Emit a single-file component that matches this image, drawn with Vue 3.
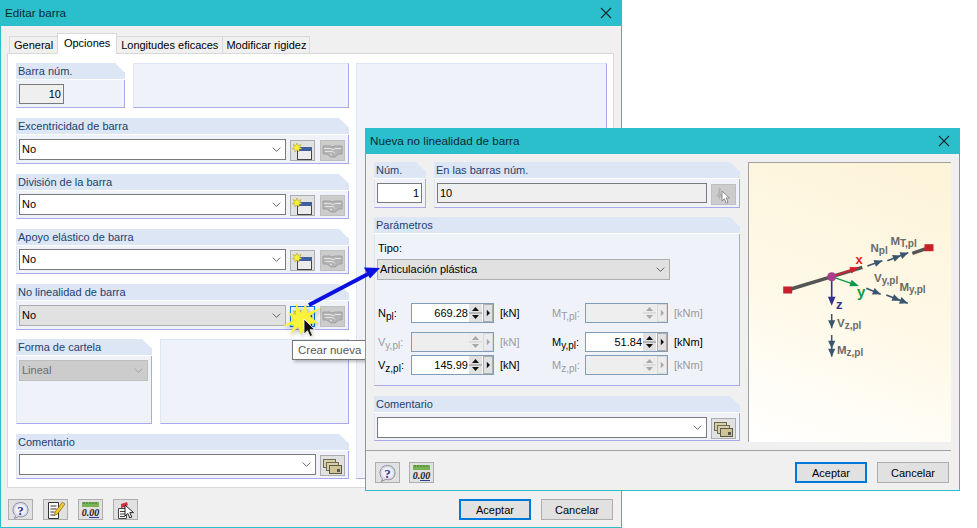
<script setup>
const leftRows = [
  { title: 'Excentricidad de barra' },
  { title: 'División de la barra', tight: true },
  { title: 'Apoyo elástico de barra', tight: true },
  { title: 'No linealidad de barra', active: true }
];

const paramRows = [
  [
    { sym: 'N', sub: 'pl', value: '669.28', unit: '[kN]' },
    { sym: 'M', sub: 'T,pl', value: '', unit: '[kNm]', off: true }
  ],
  [
    { sym: 'V', sub: 'y,pl', value: '', unit: '[kN]', off: true },
    { sym: 'M', sub: 'y,pl', value: '51.84', unit: '[kNm]' }
  ],
  [
    { sym: 'V', sub: 'z,pl', value: '145.99', unit: '[kN]' },
    { sym: 'M', sub: 'z,pl', value: '', unit: '[kNm]', off: true }
  ]
];

// triangle whose tip sits at (x, y), pointing along the direction (dx, dy)
const head = (x, y, dx, dy, len = 8, half = 3.6) => {
  const d = Math.hypot(dx, dy);
  const ux = dx / d;
  const uy = dy / d;
  const bx = x - ux * len;
  const by = y - uy * len;
  return `M${x} ${y}L${bx - uy * half} ${by + ux * half}L${bx + uy * half} ${by - ux * half}Z`;
};

// force arrows of the picture: start, end, second head when it is a moment
const forces = [
  { x1: 868.3, y1: 266, x2: 883.3, y2: 260.7 },
  { x1: 888.3, y1: 260.7, x2: 909.3, y2: 252.7, twin: true },
  { x1: 867.3, y1: 288.3, x2: 881.7, y2: 294.3 },
  { x1: 887.3, y1: 295, x2: 908.7, y2: 303.3, twin: true },
  { x1: 832.7, y1: 314, x2: 832.7, y2: 328.3 },
  { x1: 832.7, y1: 335, x2: 832.7, y2: 356.7, twin: true }
].map((f) => {
  const dx = f.x2 - f.x1;
  const dy = f.y2 - f.y1;
  const d = Math.hypot(dx, dy);
  let heads = head(f.x2, f.y2, dx, dy);
  if (f.twin) heads += head(f.x2 - (dx / d) * 8, f.y2 - (dy / d) * 8, dx, dy);
  return { stem: `M${f.x1} ${f.y1}L${f.x2} ${f.y2}`, heads };
});

const axisHeads = [
  { d: head(860, 267.3, 27, -9.4, 9, 3.4), fill: '#d8202c' },
  { d: head(860, 286, 27, 9.3, 9, 3.4), fill: '#0a9a4a' },
  { d: head(832.7, 305.7, 0, 1, 9, 3.8), fill: '#33308f' }
];
</script>

<template>
  <div class="desktop">
    <svg class="sprite" width="0" height="0">
      <defs>
        <symbol id="i-new" viewBox="0 0 21 17">
          <rect x="5.5" y="4.5" width="14" height="12" fill="#ececec" stroke="#444" />
          <rect x="6" y="4" width="14" height="4" fill="#3f5f9f" />
          <path d="M5 0l1.200 2.600L9 1.600 7.600 4.200 10 5.800 7.200 6.200 7 9 5 7 3 9l-.2-2.800L0 5.800l2.400-1.600L1 1.600l2.800 1z" fill="#f6ee3a" stroke="#a89a2a" stroke-width=".5" />
        </symbol>
        <symbol id="i-link" viewBox="0 0 21 17">
          <path d="M1 3h7l2 1 3-1h7v8h-3l-4 3H9L5 11H1z" fill="#b4b4b4" stroke="#a0a0a0" />
          <path d="M2 5.500h6l3 1 3-1h5M3 8.500h8l2 2M8 11l2 1" fill="none" stroke="#e4e4e4" />
        </symbol>
        <symbol id="i-stack" viewBox="0 0 21 17">
          <rect x="1.500" y="1.500" width="12" height="8" fill="#d8cfa8" stroke="#6b6b55" />
          <rect x="4.500" y="4.500" width="12" height="8" fill="#d8cfa8" stroke="#6b6b55" />
          <rect x="7.500" y="7.500" width="12" height="8" fill="#cfc493" stroke="#5a5a48" />
          <rect x="15" y="11" width="3" height="3" fill="#555" />
        </symbol>
        <symbol id="i-help" viewBox="0 0 21 17">
          <path d="M10.500 .5C5.500 .5 3 4 3 8c0 2.500 1 4.500 2.500 5.600L4.500 16.500l4-2c.6.200 1.300.300 2 .300C15.500 14.800 18 12 18 8S15.500 .5 10.500 .5z" fill="#d9dce8" stroke="#8a8f9f" />
          <circle cx="10.500" cy="7.800" r="5.500" fill="#eef0f6" />
          <text x="10.500" y="13" text-anchor="middle" class="help-mark">?</text>
        </symbol>
        <symbol id="i-note" viewBox="0 0 21 17">
          <path d="M3.500 .5h10v16h-10z" fill="#fbfbfb" stroke="#333" />
          <path d="M5.500 4h6M5.500 7h6M5.500 10h4M5.500 13h4" stroke="#333" />
          <path d="M17.500 0l2.500 2-7.500 10-3 1.500.5-3.500z" fill="#f5c92b" stroke="#7a5a10" stroke-width=".7" />
        </symbol>
        <symbol id="i-zero" viewBox="0 0 21 17">
          <rect x="2" y="0" width="17" height="5" fill="#77b255" />
          <path d="M4 0v2M7 0v2M10 0v2M13 0v2M16 0v2" stroke="#3f7a2c" />
          <text x="10.500" y="14" text-anchor="middle" class="zero-mark">0.00</text>
          <path d="M9 15.500h10" stroke="#2c3f8f" />
        </symbol>
        <symbol id="i-pick" viewBox="0 0 21 17">
          <path d="M3.500 6.500h8v10h-8z" fill="#fafafa" stroke="#444" />
          <path d="M5 9.500h5M5 12h5M5 14.500h5" stroke="#444" />
          <path d="M6 2l6-2 1 3-2 1 1 4-3-3-3 1z" fill="#d83040" />
          <path d="M10 3v11l2.800-2.600 2 4.600 2-.9-2-4.500h3.700z" fill="#fff" stroke="#222" />
        </symbol>
        <symbol id="i-cursor" viewBox="0 0 21 17">
          <path d="M6 0l2 2-1 4 3 3-3 1 0 3-2-3-2-1 2-2z" fill="#b4b4b4" />
          <path d="M9 4v10l2.400-2.300 1.800 4.300 1.800-.8-1.800-4.200h3.300z" fill="#fff" stroke="#8a8a8a" />
        </symbol>
      </defs>
    </svg>

    <!-- Editar barra -->
    <section class="window main-window">
      <header class="title-bar">
        <span>Editar barra</span>
        <svg class="close" viewBox="0 0 12 12"><path d="M1 1l10 10M11 1L1 11" /></svg>
      </header>
      <div class="client">
        <nav class="tabs">
          <span class="tab">General</span>
          <span class="tab current">Opciones</span>
          <span class="tab">Longitudes eficaces</span>
          <span class="tab">Modificar rigidez</span>
        </nav>
        <div class="tab-panel">
          <div class="left-col">
            <div class="row-split">
              <div class="group num-group">
                <h4>Barra núm.</h4>
                <div class="group-body"><div class="field readonly num-field">10</div></div>
              </div>
              <div class="group blank"></div>
            </div>

            <div v-for="row in leftRows" :key="row.title" class="group" :class="{ 'tall-one': row.active }">
              <h4>{{ row.title }}</h4>
              <div class="group-body line" :class="{ tight: row.tight }">
                <div class="select" :class="{ grey: row.active }">
                  <span>No</span>
                  <svg class="chev" viewBox="0 0 12 6"><path d="M1 .5l5 5 5-5" /></svg>
                </div>
                <button class="icon-btn" :class="{ focused: row.active }"><svg><use href="#i-new" /></svg></button>
                <button class="icon-btn off"><svg><use href="#i-link" /></svg></button>
              </div>
            </div>

            <div class="row-split">
              <div class="group form-group">
                <h4>Forma de cartela</h4>
                <div class="group-body">
                  <div class="select disabled">
                    <span>Lineal</span>
                    <svg class="chev" viewBox="0 0 12 6"><path d="M1 .5l5 5 5-5" /></svg>
                  </div>
                </div>
              </div>
              <div class="group blank"></div>
            </div>

            <div class="group">
              <h4>Comentario</h4>
              <div class="group-body line tight">
                <div class="select">
                  <span></span>
                  <svg class="chev" viewBox="0 0 12 6"><path d="M1 .5l5 5 5-5" /></svg>
                </div>
                <button class="icon-btn"><svg><use href="#i-stack" /></svg></button>
              </div>
            </div>
          </div>
          <div class="group blank right-col"></div>
        </div>
        <footer class="footer main-footer">
          <button class="icon-btn"><svg><use href="#i-help" /></svg></button>
          <button class="icon-btn"><svg><use href="#i-note" /></svg></button>
          <button class="icon-btn"><svg><use href="#i-zero" /></svg></button>
          <button class="icon-btn"><svg><use href="#i-pick" /></svg></button>
          <span class="spacer"></span>
          <button class="push default">Aceptar</button>
          <button class="push">Cancelar</button>
        </footer>
      </div>
    </section>

    <div class="tooltip">Crear nueva</div>

    <!-- Nueva no linealidad de barra -->
    <section class="window sub-window">
      <header class="title-bar">
        <span>Nueva no linealidad de barra</span>
        <svg class="close" viewBox="0 0 12 12"><path d="M1 1l10 10M11 1L1 11" /></svg>
      </header>
      <div class="sub-body">
        <div class="sub-left">
          <div class="row-split sub-top">
            <div class="group no-group">
              <h4>Núm.</h4>
              <div class="group-body"><div class="field num-field">1</div></div>
            </div>
            <div class="group grow">
              <h4>En las barras núm.</h4>
              <div class="group-body line">
                <div class="field readonly wide">10</div>
                <button class="icon-btn off"><svg><use href="#i-cursor" /></svg></button>
              </div>
            </div>
          </div>

          <div class="group params">
            <h4>Parámetros</h4>
            <div class="group-body">
              <div class="tipo-label">Tipo:</div>
              <div class="select grey tipo">
                <span>Articulación plástica</span>
                <svg class="chev" viewBox="0 0 12 6"><path d="M1 .5l5 5 5-5" /></svg>
              </div>
              <div class="param-grid">
                <div v-for="(row, i) in paramRows" :key="i" class="param-row" :class="'r' + i">
                  <div v-for="p in row" :key="p.sub" class="param" :class="{ off: p.off }">
                    <label>{{ p.sym }}<sub>{{ p.sub }}</sub>:</label>
                    <div class="spin">
                      <span class="spin-val">{{ p.value }}</span>
                      <span class="spin-ud">
                        <svg viewBox="0 0 13 18"><path class="tri" d="M6.500 3l3.500 4H3zM6.500 15L3 11h7z" /><path class="mid" d="M0 9h13" /></svg>
                      </span>
                      <span class="spin-next">
                        <svg viewBox="0 0 10 18"><path class="tri" d="M3.500 5l4 4-4 4z" /></svg>
                      </span>
                    </div>
                    <span class="unit">{{ p.unit }}</span>
                  </div>
                </div>
              </div>
            </div>
          </div>

          <div class="group">
            <h4>Comentario</h4>
            <div class="group-body line">
              <div class="select wide">
                <span></span>
                <svg class="chev" viewBox="0 0 12 6"><path d="M1 .5l5 5 5-5" /></svg>
              </div>
              <button class="icon-btn"><svg><use href="#i-stack" /></svg></button>
            </div>
          </div>
        </div>

        <div class="scene">
          <svg width="203" height="280" viewBox="749 162 203 280">
            <g class="bar">
              <path d="M788.700 290L863.300 267.300" />
              <path d="M913.300 253.300L930 247.700" />
            </g>
            <rect x="784.200" y="286.500" width="9" height="7" fill="#c8202a" />
            <rect x="925.500" y="244.200" width="9" height="7" fill="#c8202a" />
            <path d="M832.700 276.700L855 269" stroke="#d8202c" stroke-width="1.600" />
            <path d="M832.700 276.700L855 284.400" stroke="#0a9a4a" stroke-width="1.400" />
            <path d="M832.700 277V298" stroke="#33308f" stroke-width="1.600" />
            <path v-for="a in axisHeads" :key="a.fill" :d="a.d" :fill="a.fill" />
            <circle cx="832.700" cy="276.700" r="4.500" fill="#a8408c" />
            <text x="856.500" y="264" class="axis" fill="#e0202c">x</text>
            <text x="858" y="296.500" class="axis big" fill="#0a9a4a">y</text>
            <text x="837" y="309" class="axis" fill="#33308f">z</text>

            <g v-for="(f, i) in forces" :key="i">
              <path :d="f.stem" class="stem" />
              <path :d="f.heads" class="tip" />
            </g>

            <text x="871.500" y="252" class="sym">N<tspan class="low" dy="2">pl</tspan></text>
            <text x="891.500" y="245" class="sym">M<tspan class="low" dy="2">T,pl</tspan></text>
            <text x="875" y="282" class="sym">V<tspan class="low" dy="2">y,pl</tspan></text>
            <text x="900.500" y="290.500" class="sym">M<tspan class="low" dy="2">y,pl</tspan></text>
            <text x="838" y="326.500" class="sym">V<tspan class="low" dy="2">z,pl</tspan></text>
            <text x="838" y="354" class="sym">M<tspan class="low" dy="2">z,pl</tspan></text>
          </svg>
        </div>
      </div>
      <hr class="sep" />
      <footer class="footer sub-footer">
        <button class="icon-btn"><svg><use href="#i-help" /></svg></button>
        <button class="icon-btn"><svg><use href="#i-zero" /></svg></button>
        <span class="spacer"></span>
        <button class="push default">Aceptar</button>
        <button class="push">Cancelar</button>
      </footer>
    </section>

    <!-- callout arrow, click burst and mouse pointer over both windows -->
    <svg class="overlay" width="977" height="528" viewBox="0 0 977 528">
      <path d="M309 305L368 274" stroke="#0a10e0" stroke-width="4" />
      <path d="M380 268l-16-.500 6 11z" fill="#0a10e0" />
      <path class="burst" d="M322 307L310 316L318 323L309 324L313 337L305 327L301 335L298 327L290 335L294 325L283 326L293 320L288 312L296 315L296 303L301 313L306 303L307 313Z" />
      <path d="M304 319v15l3.500-3.300 2.500 5.800 2.500-1.100-2.500-5.700h4.800z" fill="#111" stroke="#fff" stroke-width=".8" />
    </svg>
  </div>
</template>

<style>
html, body { margin: 0; background: #fff; }
</style>

<style scoped>
.desktop {
  position: relative;
  width: 977px;
  height: 528px;
  overflow: hidden;
  background: #fff;
  font-family: "Liberation Sans", Arial, sans-serif;
  font-size: 11px;
  color: #000;
}
.sprite { position: absolute; }

.window {
  position: absolute;
  box-sizing: border-box;
  display: flex;
  flex-direction: column;
  border: 1px solid #2bbfcc;
  border-top: 0;
  background: #f0f0f0;
}
.main-window { left: 0; top: 0; width: 622px; height: 528px; }
.sub-window { left: 365px; top: 128px; width: 595px; height: 363px; }

.title-bar {
  box-sizing: border-box;
  flex: none;
  height: 26px;
  margin: 0 -1px;
  padding: 0 10px 1px 5px;
  display: flex;
  align-items: center;
  justify-content: space-between;
  background: #2bbfcc;
  font-size: 11.7px;
  color: #0c2a2e;
}
.close { width: 12px; height: 12px; fill: none; stroke: #0c2a2e; stroke-width: 1.100; }

.client { flex: 1; display: flex; flex-direction: column; padding: 7px 7px 0 6px; min-height: 0; }

.tabs { display: flex; height: 20px; align-items: flex-end; padding-left: 3px; position: relative; z-index: 1; }
.tab {
  box-sizing: border-box;
  height: 17px;
  padding: 0 4px;
  line-height: 16px;
  background: #f0f0f0;
  border: 1px solid #d9d9d9;
  border-bottom: 0;
  margin-left: -1px;
  white-space: nowrap;
}
.tab.current { width: 60px; height: 21px; padding: 0; text-align: center; line-height: 18px; background: #fff; margin-bottom: -1px; }
.tab:last-child { padding: 0 3px; }

.tab-panel {
  box-sizing: border-box;
  height: 435px;
  padding: 9px 6px 0 8px;
  display: flex;
  gap: 7px;
  background: #fff;
  border: 1px solid #d9d9d9;
}
.left-col {
  width: 333px;
  display: grid;
  grid-template-rows: 45px 46px 45px 45px 45px 85px 45px;
  row-gap: 10px;
  align-content: start;
}
.tall-one { height: 46px; }
.right-col { width: 251px; height: 416px; }

.row-split { display: flex; gap: 8px; min-height: 0; }
.num-group { width: 109px; flex: none; }
.form-group { width: 136px; flex: none; }
.row-split .blank { flex: 1; }

.group {
  box-sizing: border-box;
  background: #eff3f9;
  border-left: 1px solid #dce6f4;
  border-right: 1px solid #a9a9ea;
  border-bottom: 1px solid #a9a9ea;
  clip-path: polygon(0 0, calc(100% - 10px) 0, 100% 10px, 100% 100%, 0 100%);
}
.group.blank { clip-path: none; border-top: 1px solid #dce6f4; }
.group h4 {
  margin: 0 -1px;
  height: 16px;
  padding-left: 2px;
  line-height: 16px;
  font-size: 11px;
  font-weight: 400;
  color: #1f3f6e;
  background: #dce6f4;
  border-bottom: 1px solid #fff;
  white-space: nowrap;
}
.group-body { padding: 4px 3px 0 2px; }
.group-body.tight { padding-top: 3px; }
.line { display: flex; align-items: flex-start; gap: 4px; }
.line .icon-btn { margin-top: 1px; }
.line .icon-btn + .icon-btn { margin-left: 1px; }

.field, .select {
  box-sizing: border-box;
  height: 21px;
  border: 1px solid #7a7a7a;
  background: #fff;
  line-height: 19px;
}
.field { padding: 0 2px; }
.num-field { width: 45px; text-align: right; height: 20px; line-height: 18px; }
.readonly { background: #efefef; }
.wide { flex: 1; }
.sub-left .line .field { height: 20px; line-height: 18px; }

.select {
  flex: 1;
  display: flex;
  align-items: center;
  justify-content: space-between;
  padding: 0 4px 0 2px;
}
.select.grey { background: #e1e1e1; border-color: #adadad; }
.select.disabled { background: #cccccc; border-color: #bfbfbf; color: #6d6d6d; }
.select.disabled .chev { stroke: #9a9a9a; }
.chev { width: 9px; height: 5px; fill: none; stroke: #444; stroke-width: 1.100; }

.icon-btn {
  box-sizing: border-box;
  flex: none;
  width: 25px;
  height: 21px;
  padding: 1px 0 0;
  display: flex;
  align-items: center;
  justify-content: center;
  background: #e1e1e1;
  border: 1px solid #adadad;
  border-radius: 0;
}
.icon-btn svg { width: 21px; height: 17px; }
.icon-btn.off { background: #cccccc; border-color: #bfbfbf; }
.icon-btn.focused { border-color: #0078d7; background: #e5f1fb; }

.footer { flex: 1; display: flex; align-items: flex-start; gap: 10px; padding-top: 11px; }
.main-footer { padding-left: 1px; padding-right: 1px; }
.spacer { flex: 1; }
.push {
  box-sizing: border-box;
  width: 72px;
  height: 21px;
  padding: 0;
  background: #e1e1e1;
  border: 1px solid #adadad;
  font: inherit;
  color: #000;
  border-radius: 0;
}
.push.default { border: 2px solid #0078d7; }

.tooltip {
  position: absolute;
  left: 292px;
  top: 340px;
  box-sizing: border-box;
  width: 80px;
  height: 20px;
  padding-left: 5px;
  line-height: 18px;
  font-size: 11.5px;
  background: #fff;
  border: 1px solid #767676;
  color: #575757;
  box-shadow: 2px 2px 3px rgba(0, 0, 0, .25);
}

.sub-body {
  box-sizing: border-box;
  height: 296px;
  flex: none;
  padding: 8px 8px 0;
  display: flex;
  gap: 8px;
}
.sub-left { width: 367px; display: flex; flex-direction: column; gap: 9px; }
.sub-top { height: 46px; flex: none; }
.no-group { width: 52px; flex: none; }
.grow { flex: 1; }
.params { height: 169px; flex: none; }
.sub-left > .group:last-child { height: 45px; margin-top: 1px; }

.tipo-label { height: 21px; padding-left: 1px; line-height: 20px; }
.tipo { width: 293px; flex: none; }

.param-grid { margin-top: 23px; }
.param-row { display: flex; height: 20px; }
.param-row.r1 { margin-top: 9px; }
.param-row.r2 { margin-top: 3px; }
.param { display: flex; align-items: center; width: 174px; }
.param label { width: 34px; flex: none; padding-left: 1px; box-sizing: border-box; white-space: nowrap; }
.param sub { font-size: 10px; line-height: 0; vertical-align: -3px; }
.spin {
  box-sizing: border-box;
  width: 83px;
  height: 20px;
  flex: none;
  display: flex;
  align-items: center;
  background: #fff;
  border: 1px solid #7f9db9;
}
.spin-val { flex: 1; text-align: right; padding-right: 1px; }
.spin-ud, .spin-next {
  box-sizing: border-box;
  height: 18px;
  background: #e1e1e1;
  display: flex;
}
.spin-ud { width: 13px; }
.spin-next { width: 10px; margin-left: 1px; border: 1px solid #adadad; }
.spin svg { width: 100%; height: 100%; }
.tri { fill: #111; }
.mid { stroke: #8a8a8a; }
.unit { margin-left: 6px; }
.param.off { color: #9a9a9a; }
.param.off .spin { background: #eeeeee; }
.param.off .spin-ud, .param.off .spin-next { background: #ececec; border-color: #d8d8d8; }
.param.off .tri { fill: #a8a8a8; }
.param.off .mid { stroke: #cfcfcf; }

.scene {
  box-sizing: border-box;
  width: 203px;
  height: 280px;
  border-top: 1px solid #a0a0a0;
  border-left: 1px solid #a0a0a0;
  background: linear-gradient(200deg, #fdf3d8 0%, #fef9e8 55%, #ffffff 100%);
}
.scene svg { display: block; margin: -1px 0 0 -1px; }
.bar path { stroke: #555; stroke-width: 3.500; fill: none; }
.stem { stroke: #3a5570; stroke-width: 1.500; fill: none; }
.tip { fill: #3a5570; }
.axis { font: 700 13px "Liberation Sans", sans-serif; }
.axis.big { font-size: 15px; }
.sym { font: 700 11.5px "Liberation Sans", sans-serif; fill: #6a6a6a; }
.low { font-size: 10px; }
.help-mark { font: 700 13px "Liberation Serif", serif; fill: #2c3f8f; }
.zero-mark { font: italic 700 10px "Liberation Serif", serif; fill: #222; }

.sep { flex: none; height: 1px; margin: 0 8px 0 0; border: 0; background: #a0a0a0; }
.sub-footer { padding: 11px 10px 0 9px; gap: 9px; }
.sub-footer .push + .push { margin-left: 1px; }

.overlay { position: absolute; left: 0; top: 0; pointer-events: none; }
.burst { fill: #fbf23a; filter: drop-shadow(1px 2px 2px rgba(0, 0, 0, .3)); }
</style>
